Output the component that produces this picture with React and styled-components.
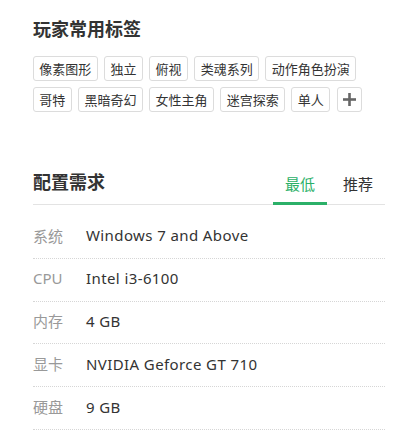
import React, { useState } from "react";
import styled, { createGlobalStyle } from "styled-components";

const GlobalStyle = createGlobalStyle`
  html, body {
    margin: 0;
    padding: 0;
    background: #fff;
  }
  body {
    font-family: "Noto Sans", "Noto Sans CJK SC", sans-serif;
    -webkit-font-smoothing: antialiased;
  }
`;

const tags = [
  "像素图形",
  "独立",
  "俯视",
  "类魂系列",
  "动作角色扮演",
  "哥特",
  "黑暗奇幻",
  "女性主角",
  "迷宫探索",
  "单人",
];

const specs = [
  { label: "系统", value: "Windows 7 and Above" },
  { label: "CPU", value: "Intel i3-6100" },
  { label: "内存", value: "4 GB" },
  { label: "显卡", value: "NVIDIA Geforce GT 710" },
  { label: "硬盘", value: "9 GB" },
];

const App = () => {
  const [tab, setTab] = useState("min");

  return (
    <>
      <GlobalStyle />
      <Page>
        <Section>
          <Title>玩家常用标签</Title>
          <TagList>
            {tags.map((t) => (
              <Tag key={t}>{t}</Tag>
            ))}
            <AddTag aria-label="添加标签">
              <svg width="13" height="13" viewBox="0 0 13 13">
                <rect x="5.2" y="0" width="2.6" height="13" fill="#666" />
                <rect x="0" y="5.2" width="13" height="2.6" fill="#666" />
              </svg>
            </AddTag>
          </TagList>
        </Section>

        <Section>
          <SpecHeader>
            <Title>配置需求</Title>
            <Tabs>
              <TabButton active={tab === "min"} onClick={() => setTab("min")}>
                最低
              </TabButton>
              <TabButton active={tab === "rec"} onClick={() => setTab("rec")}>
                推荐
              </TabButton>
            </Tabs>
          </SpecHeader>
          <SpecList>
            {specs.map((s) => (
              <SpecRow key={s.label}>
                <SpecLabel>{s.label}</SpecLabel>
                <SpecValue>{s.value}</SpecValue>
              </SpecRow>
            ))}
          </SpecList>
        </Section>
      </Page>
    </>
  );
};

const Page = styled.div`
  width: 352px;
  padding: 16px 0 0 33px;
  display: flex;
  flex-direction: column;
  gap: 57px;
`;

const Section = styled.section`
  display: flex;
  flex-direction: column;
`;

const Title = styled.h2`
  margin: 0;
  font-family: "Noto Sans CJK SC", sans-serif;
  font-size: 18px;
  line-height: 24px;
  font-weight: 700;
  color: #333;
`;

const TagList = styled.div`
  display: flex;
  flex-wrap: wrap;
  gap: 6px 6.5px;
  margin-top: 16px;
`;

const Tag = styled.span`
  box-sizing: border-box;
  height: 25px;
  padding: 0 5.3px;
  border: 1px solid #dcdcdc;
  border-radius: 3px;
  font-family: "Noto Sans CJK SC", sans-serif;
  font-size: 13px;
  line-height: 23px;
  color: #333;
  white-space: nowrap;
`;

const AddTag = styled.button`
  box-sizing: border-box;
  width: 25px;
  height: 25px;
  padding: 0;
  border: 1px solid #dcdcdc;
  border-radius: 3px;
  background: #fff;
  display: flex;
  align-items: center;
  justify-content: center;
  cursor: pointer;
`;

const SpecHeader = styled.div`
  display: flex;
  align-items: flex-start;
  justify-content: space-between;
  border-bottom: 1px solid #e3e3e3;
  height: 35px;
`;

const Tabs = styled.div`
  display: flex;
  gap: 4px;
  align-self: stretch;
`;

const TabButton = styled.button`
  width: 54px;
  padding: 0 0 3px;
  margin-bottom: -1px;
  border: none;
  border-bottom: 3px solid ${(p) => (p.active ? "#2bb068" : "transparent")};
  background: none;
  font-family: "Noto Sans CJK SC", sans-serif;
  font-size: 15px;
  line-height: 28px;
  color: ${(p) => (p.active ? "#2bb068" : "#333")};
  cursor: pointer;
`;

const SpecList = styled.div`
  display: flex;
  flex-direction: column;
  margin-top: 11px;
`;

const SpecRow = styled.div`
  box-sizing: border-box;
  display: flex;
  align-items: center;
  height: 42.8px;
  padding-bottom: 3px;
  border-bottom: 1px dotted #d6d6d6;
  font-size: 15px;
`;

const SpecLabel = styled.span`
  width: 53px;
  color: #999;
`;

const SpecValue = styled.span`
  color: #333;
  letter-spacing: 0.4px;
`;

export default App;
